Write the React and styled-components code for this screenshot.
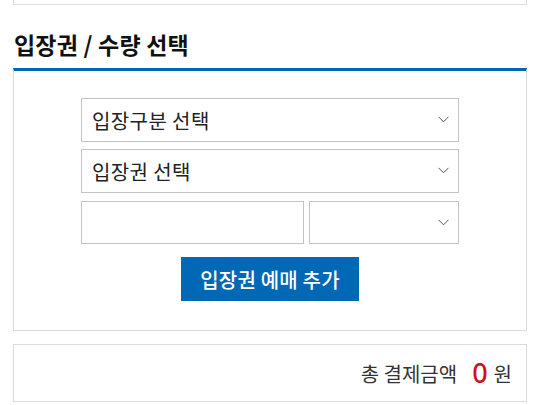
import React from "react";
import styled, { createGlobalStyle } from "styled-components";

const Global = createGlobalStyle`
  html, body { margin: 0; padding: 0; background: #fff; }
  body { font-family: "Noto Sans CJK KR", "Noto Sans", sans-serif; color: #222; }
  * { box-sizing: border-box; }
`;

const Page = styled.div`
  width: 540px;
  padding: 0 13px;
`;

const TopCard = styled.div`
  height: 5px;
  border: 1px solid #dcdcdc;
  border-top: none;
`;

const Title = styled.h2`
  margin: 0;
  padding: 22px 0 0 1px;
  height: 63px;
  font-size: 23px;
  font-weight: 700;
  line-height: 34px;
  letter-spacing: 0.2px;
  color: #111;
`;

const Panel = styled.div`
  border: 1px solid #dcdcdc;
  border-top: 3px solid #0066b3;
  padding: 27px 0 29px;
  display: flex;
  justify-content: center;
`;

const Form = styled.div`
  width: 378px;
  display: flex;
  flex-direction: column;
  gap: 7px;
  align-items: stretch;
`;

const Row = styled.div`
  display: flex;
  gap: 5px;
  margin-top: 1px;
`;

const Field = styled.div`
  position: relative;
  height: ${(p) => p.$h || 44}px;
  width: ${(p) => (p.$w ? p.$w + "px" : "auto")};
  flex: ${(p) => (p.$grow ? "1 1 auto" : "none")};
  border: 1px solid #c4c4c4;
  background: #fff;
  display: flex;
  align-items: center;
  padding: 0 10px;
  font-size: 20px;
  letter-spacing: 0.4px;
  color: #222;
`;

const Chevron = styled.svg`
  position: absolute;
  right: 9px;
  top: 50%;
  margin-top: -4px;
`;

const Arrow = () => (
  <Chevron width="11" height="7" viewBox="0 0 11 7">
    <path d="M0.5 0.8 L5.5 5.8 L10.5 0.8" fill="none" stroke="#555" strokeWidth="1" />
  </Chevron>
);

const ButtonWrap = styled.div`
  display: flex;
  justify-content: center;
  margin-top: 6px;
`;

const Button = styled.button`
  width: 178px;
  height: 44px;
  border: none;
  background: #0068b5;
  color: #fff;
  font-family: inherit;
  font-size: 20px;
  font-weight: 500;
  letter-spacing: 0.2px;
  padding: 0;
  cursor: pointer;
`;

const TotalCard = styled.div`
  margin-top: 13px;
  height: 58px;
  border: 1px solid #dcdcdc;
  display: flex;
  align-items: center;
  justify-content: flex-end;
  padding: 0 14px 0 0;
  font-size: 20px;
  color: #333;
`;

const Amount = styled.span`
  color: #d0121b;
  font-size: 27px;
  font-weight: 500;
  margin: -2px 6px 0 15px;
  font-family: "Noto Sans", sans-serif;
`;

export default function App() {
  return (
    <>
      <Global />
      <Page>
        <TopCard />
        <Title>입장권 / 수량 선택</Title>
        <Panel>
          <Form>
            <Field>
              입장구분 선택
              <Arrow />
            </Field>
            <Field>
              입장권 선택
              <Arrow />
            </Field>
            <Row>
              <Field $h={43} $grow />
              <Field $h={43} $w={150}>
                <Arrow />
              </Field>
            </Row>
            <ButtonWrap>
              <Button>입장권 예매 추가</Button>
            </ButtonWrap>
          </Form>
        </Panel>
        <TotalCard>
          총 결제금액<Amount>0</Amount>원
        </TotalCard>
      </Page>
    </>
  );
}
